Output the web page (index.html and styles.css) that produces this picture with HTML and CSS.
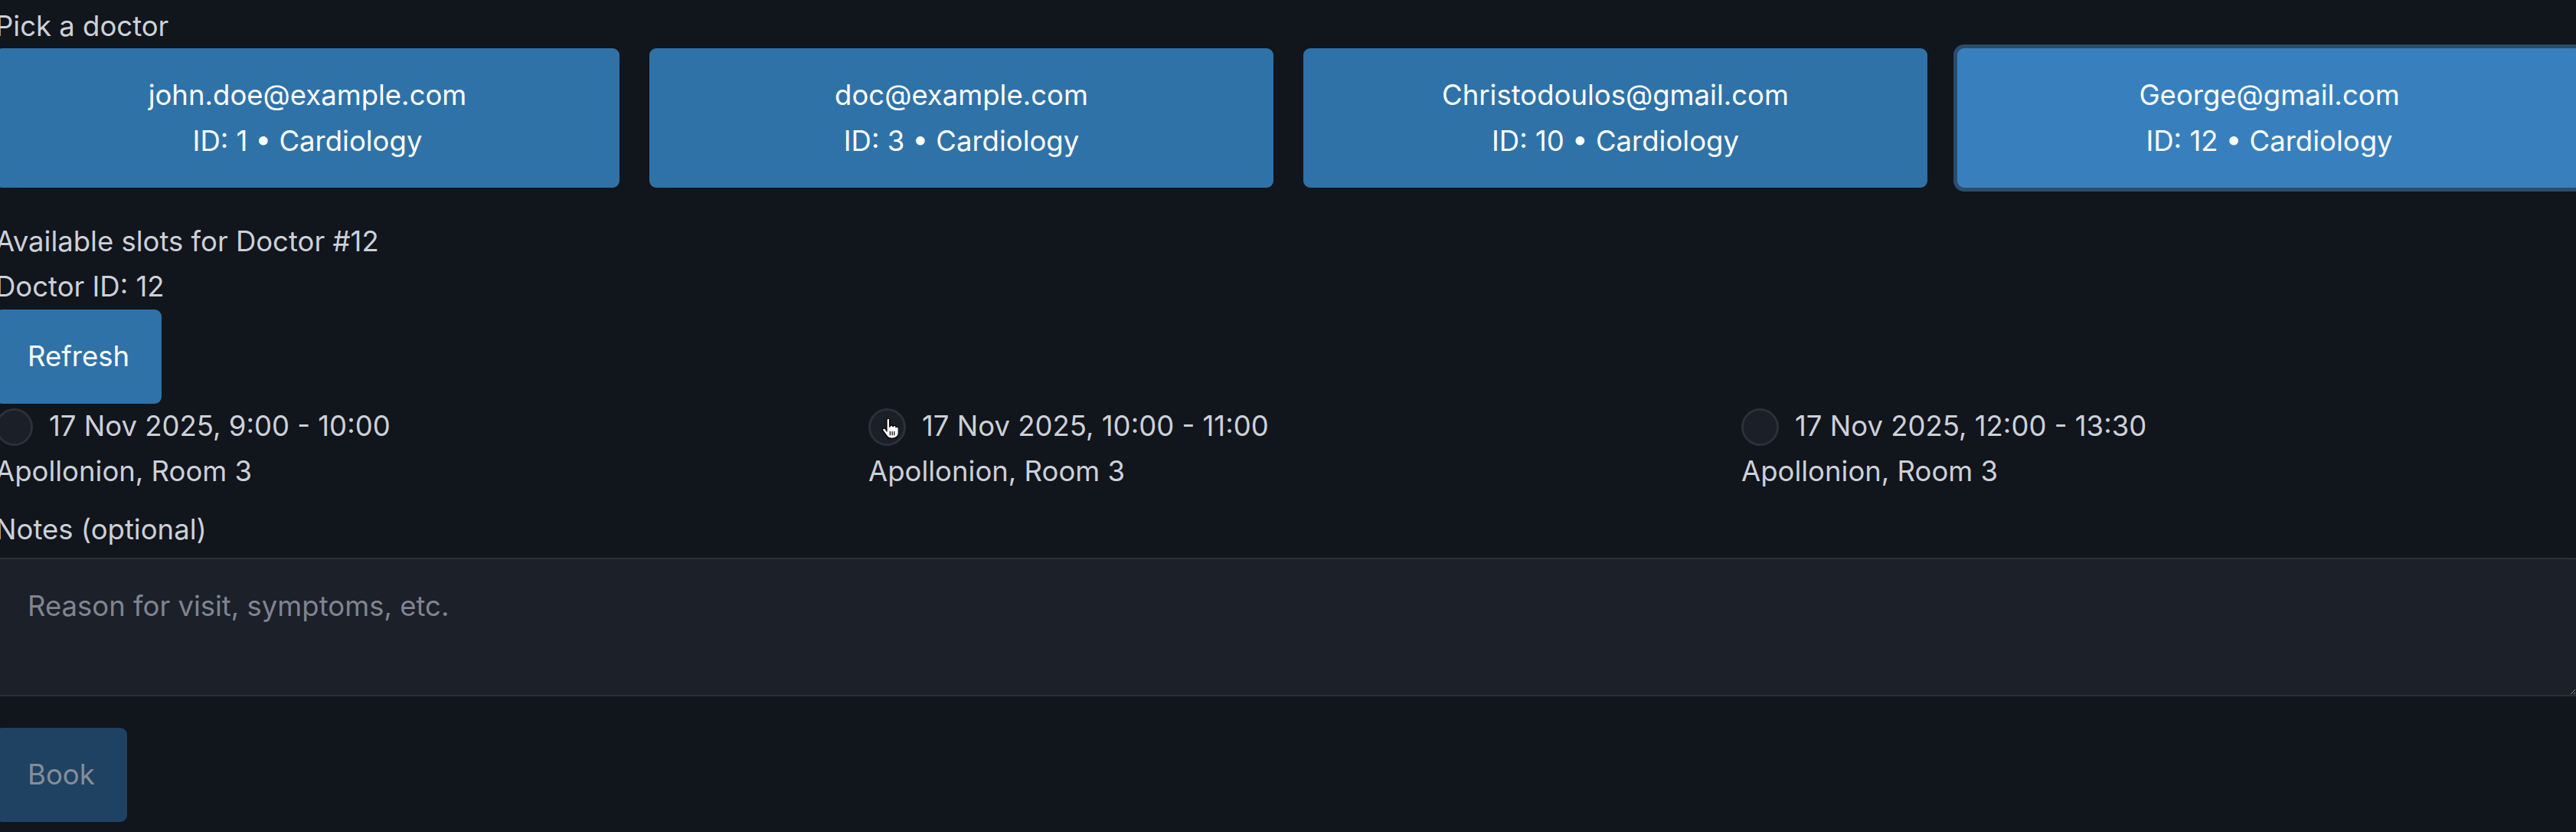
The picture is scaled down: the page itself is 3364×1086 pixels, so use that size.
FILE: index.html
```html
<!DOCTYPE html>
<html lang="en">
<head>
<meta charset="utf-8">
<title>Book appointment</title>
<link rel="stylesheet" href="styles.css">
</head>
<body>
<main class="page">
  <div class="label">Pick a doctor</div>
  <div class="doctors">
    <button class="doctor"><span class="line">john.doe@example.com</span><span class="line">ID: 1 • Cardiology</span></button>
    <button class="doctor"><span class="line">doc@example.com</span><span class="line">ID: 3 • Cardiology</span></button>
    <button class="doctor"><span class="line">Christodoulos@gmail.com</span><span class="line">ID: 10 • Cardiology</span></button>
    <button class="doctor selected"><span class="line">George@gmail.com</span><span class="line">ID: 12 • Cardiology</span></button>
  </div>

  <div class="slots-title">Available slots for Doctor #12</div>
  <div class="label">Doctor ID: 12</div>
  <button class="btn">Refresh</button>

  <div class="slots">
    <label class="slot">
      <span class="slot-row"><span class="radio"></span><span>17 Nov 2025, 9:00 - 10:00</span></span>
      <span class="slot-loc">Apollonion, Room 3</span>
    </label>
    <label class="slot">
      <span class="slot-row"><span class="radio hover">
        <svg class="cursor" viewBox="0 0 16 20" width="22" height="27" aria-hidden="true">
          <path d="M5 1.5c0-.8.6-1.4 1.4-1.4s1.4.6 1.4 1.4V8l.4-.1c.2-.7.8-1.1 1.4-1.1.7 0 1.2.4 1.4 1l.3-.1c.3-.5.8-.8 1.3-.8.8 0 1.4.6 1.4 1.4v.2c.3-.2.6-.3 1-.3.8 0 1.4.6 1.4 1.4v4.6c0 2.8-2.2 5.1-5 5.1H9c-1.6 0-3-.8-3.9-2.1L1.3 12c-.5-.7-.4-1.600.2-2.1.6-.5 1.5-.4 2 .2L5 12V1.5z" fill="#fff" stroke="#000" stroke-width="1"/>
          <path d="M8.3 12.5v4M10.3 12.5v4M12.3 12.5v4" stroke="#000" stroke-width="0.9"/>
        </svg>
      </span><span>17 Nov 2025, 10:00 - 11:00</span></span>
      <span class="slot-loc">Apollonion, Room 3</span>
    </label>
    <label class="slot">
      <span class="slot-row"><span class="radio"></span><span>17 Nov 2025, 12:00 - 13:30</span></span>
      <span class="slot-loc">Apollonion, Room 3</span>
    </label>
  </div>

  <div class="label notes-label">Notes (optional)</div>
  <textarea class="notes" placeholder="Reason for visit, symptoms, etc."></textarea>

  <button class="btn book" disabled>Book</button>
</main>
</body>
</html>
```

FILE: styles.css
```css
html, body {
  margin: 0;
  padding: 0;
  overflow: hidden;
  background: #11151c;
}

body {
  font-family: Inter, "Liberation Sans", Arial, sans-serif;
  font-size: 36.5px;
  line-height: 59px;
  color: #ccd0d8;
}

.page {
  width: 3377px;
  margin-left: -6px;
  padding-top: 5px;
  display: flex;
  flex-direction: column;
  align-items: flex-start;
}

.label {
  height: 59px;
}

.doctors {
  align-self: stretch;
  display: grid;
  grid-template-columns: repeat(4, 1fr);
  gap: 39px;
  margin-top: -1px;
}

.doctor {
  font: inherit;
  line-height: 60px;
  color: #ffffff;
  background: #2f72a8;
  border: 0;
  border-radius: 9px;
  padding: 31px 16px 31px;
  display: flex;
  flex-direction: column;
  align-items: center;
  height: 182px;
}

.doctor.selected {
  background: #3880bd;
  box-shadow: 0 0 0 5px #2c4c6b;
}

.slots-title {
  margin-top: 41px;
  height: 59px;
}

.btn {
  font: inherit;
  line-height: 59px;
  color: #ffffff;
  background: #2f72a8;
  border: 0;
  border-radius: 9px;
  padding: 32px 42px;
}

.slots {
  align-self: stretch;
  display: grid;
  grid-template-columns: repeat(3, 1fr);
  gap: 43px;
}

.slot {
  display: flex;
  flex-direction: column;
}

.slot-row {
  display: flex;
  align-items: center;
  height: 59px;
}

.radio {
  position: relative;
  box-sizing: border-box;
  width: 49px;
  height: 49px;
  border-radius: 50%;
  background: #1b1f27;
  border: 3px solid #2b303a;
  margin-right: 21px;
  margin-top: 1px;
  flex: none;
}

.cursor {
  position: absolute;
  left: 14px;
  top: 10px;
}

.notes-label {
  margin-top: 17px;
  height: 66px;
}

.notes {
  align-self: stretch;
  box-sizing: border-box;
  height: 181px;
  margin-right: 5px;
  font: inherit;
  line-height: 59px;
  color: #ccd0d8;
  background: #1c2029;
  border: 2px solid #2a2f39;
  border-radius: 4px;
  padding: 32px 40px;
  resize: vertical;
  outline: none;
}

.notes::placeholder {
  color: #7f8591;
}

.book {
  margin-top: 41px;
  background: #1f4262;
  color: #858d98;
}
```
